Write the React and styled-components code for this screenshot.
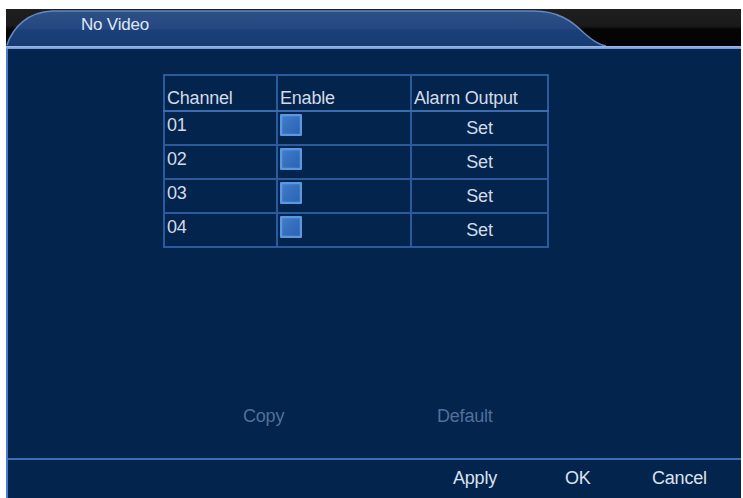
import React from "react";
import styled, { createGlobalStyle } from "styled-components";

const Global = createGlobalStyle`
  html, body { margin: 0; padding: 0; background: #ffffff; }
  body { font-family: "Liberation Sans", Arial, sans-serif; }
  #root { width: 743px; height: 498px; overflow: hidden; }
`;

const Frame = styled.div`
  margin: 9px 0 0 6px;
  width: 735px;
  height: 489px;
  display: flex;
  flex-direction: column;
`;

const Header = styled.div`
  position: relative;
  height: 37px;
  flex: none;
  background: linear-gradient(#1f1f1f 0%, #1a1a1a 45%, #050505 55%, #030303 100%);
  display: flex;
  align-items: flex-start;
`;

const TabShape = styled.svg`
  position: absolute;
  left: 0;
  top: 0;
`;

const Title = styled.div`
  position: relative;
  padding: 6px 0 0 75px;
  font-size: 17px;
  color: #dfe7f4;
  letter-spacing: -0.2px;
`;

const HeaderLine = styled.div`
  height: 3px;
  flex: none;
  background: linear-gradient(#9fbcec, #6f95d6);
`;

const Panel = styled.div`
  flex: 1;
  display: flex;
  flex-direction: column;
  background: #03244c;
  border-left: 2px solid #4a7bd0;
`;

const Content = styled.div`
  flex: 1;
  display: flex;
  flex-direction: column;
  padding: 25px 0 0 155px;
`;

const Grid = styled.table`
  border-collapse: collapse;
  table-layout: fixed;
  width: 384px;
  border: 2px solid #2b5b9c;
`;

const Col = styled.col`
  width: ${(p) => p.$w}px;
`;

const HeadCell = styled.th`
  height: 32px;
  padding: 0 2px 2px 2px;
  border: 2px solid #2b5b9c;
  text-align: left;
  vertical-align: bottom;
  font-weight: normal;
  font-size: 18px;
  line-height: 20px;
  color: #d3dbe8;
  letter-spacing: -0.2px;
  border-bottom-color: #3a6cb0;
`;

const Cell = styled.td`
  height: ${(p) => (p.$center ? "32px" : "29px")};
  padding: ${(p) => (p.$center ? "0" : "3px 2px 0 2px")};
  border: 2px solid #2b5b9c;
  vertical-align: ${(p) => (p.$center ? "middle" : "top")};
  text-align: ${(p) => (p.$center ? "center" : "left")};
  font-size: 18px;
  line-height: 20px;
  color: #d3dbe8;
  letter-spacing: -0.2px;
`;

const Check = styled.div`
  width: 18px;
  height: 18px;
  margin-top: -1px;
  border: 2px solid #5b98e2;
  border-radius: 1px;
  background: linear-gradient(135deg, #3e7ccc, #2a63b0);
  box-shadow: inset 0 0 2px rgba(180, 215, 255, 0.35);
`;

const Actions = styled.div`
  margin-top: auto;
  display: flex;
  padding: 0 0 31px 80px;
`;

const DimButton = styled.div`
  width: ${(p) => p.$w}px;
  font-size: 18px;
  color: #52709a;
  letter-spacing: -0.2px;
`;

const Footer = styled.div`
  height: 38px;
  flex: none;
  border-top: 2px solid #3d6fb8;
  display: flex;
  align-items: center;
  padding-left: 445px;
`;

const FootButton = styled.div`
  width: ${(p) => p.$w}px;
  font-size: 18px;
  color: #dce3ee;
  letter-spacing: -0.2px;
  padding-bottom: 2px;
`;

const rows = ["01", "02", "03", "04"];

export default function App() {
  return (
    <>
      <Global />
      <Frame>
        <Header>
          <TabShape width="735" height="37" viewBox="0 0 735 37">
            <defs>
              <linearGradient id="tabg" x1="0" y1="0" x2="0" y2="1">
                <stop offset="0" stopColor="#2d5088" />
                <stop offset="0.5" stopColor="#244781" />
                <stop offset="0.55" stopColor="#1b3f78" />
                <stop offset="1" stopColor="#173b72" />
              </linearGradient>
            </defs>
            <path
              d="M0,37 C6,18 22,3 46,2 L528,2 C552,2 566,12 578,24 C588,33 594,36 600,37 Z"
              fill="url(#tabg)"
            />
            <path
              d="M1,36 C7,18 22,3 46,2 L528,2 C552,2 566,12 578,24 C588,33 594,36 600,37"
              fill="none"
              stroke="#6688bf"
              strokeWidth="1.5"
            />
          </TabShape>
          <Title>No Video</Title>
        </Header>
        <HeaderLine />
        <Panel>
          <Content>
            <Grid>
              <colgroup>
                <Col $w={113} />
                <Col $w={134} />
                <Col $w={137} />
              </colgroup>
              <thead>
                <tr>
                  <HeadCell>Channel</HeadCell>
                  <HeadCell>Enable</HeadCell>
                  <HeadCell>Alarm Output</HeadCell>
                </tr>
              </thead>
              <tbody>
                {rows.map((r) => (
                  <tr key={r}>
                    <Cell>{r}</Cell>
                    <Cell>
                      <Check />
                    </Cell>
                    <Cell $center>Set</Cell>
                  </tr>
                ))}
              </tbody>
            </Grid>
            <Actions>
              <DimButton $w={194}>Copy</DimButton>
              <DimButton $w={80}>Default</DimButton>
            </Actions>
          </Content>
          <Footer>
            <FootButton $w={112}>Apply</FootButton>
            <FootButton $w={87}>OK</FootButton>
            <FootButton $w={70}>Cancel</FootButton>
          </Footer>
        </Panel>
      </Frame>
    </>
  );
}
